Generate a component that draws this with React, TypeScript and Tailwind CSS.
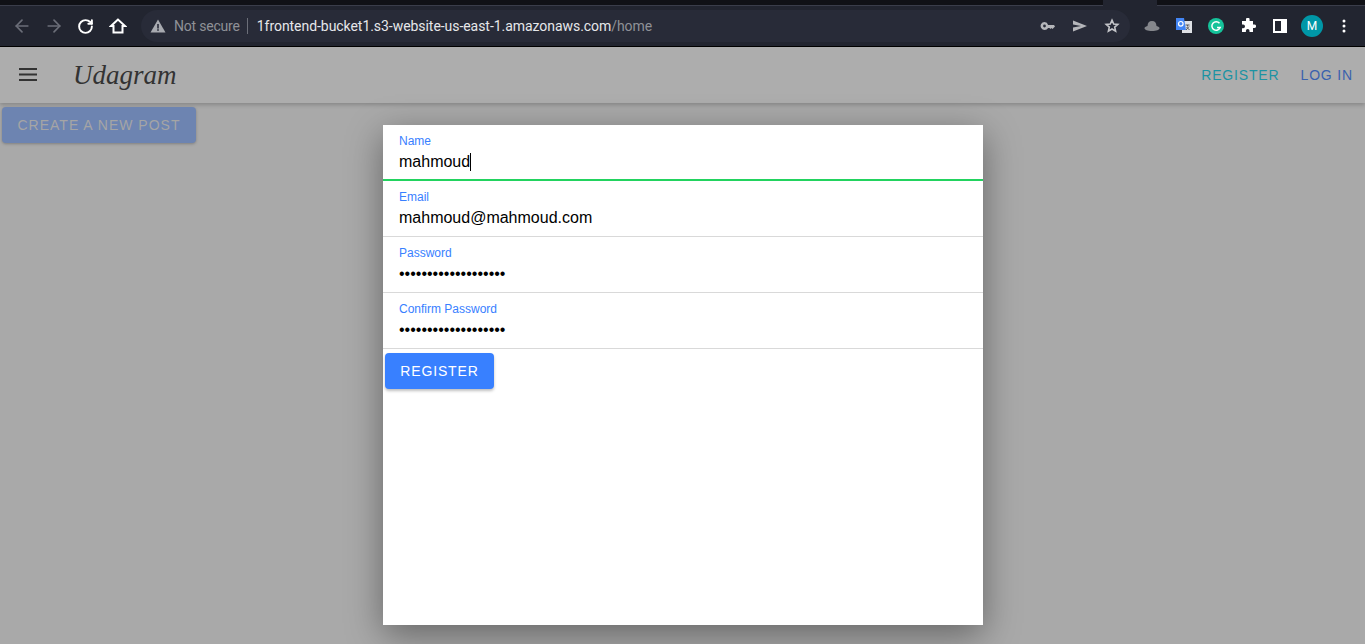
import React from 'react';
import { ArrowLeft, ArrowRight, RotateCw } from 'lucide-react';

const fields = [
  { label: 'Name', value: 'mahmoud', active: true },
  { label: 'Email', value: 'mahmoud@mahmoud.com' },
  { label: 'Password', value: '•••••••••••••••••••' },
  { label: 'Confirm Password', value: '•••••••••••••••••••' },
];

function BrowserBar() {
  return (
    <div className="relative h-[47px] bg-[#0f1014] flex flex-col font-['Roboto',sans-serif]">
      <div className="h-[6px] bg-[#101116] border-b border-[#3a3d4a] shrink-0" />
      {/* active tab runs into the toolbar */}
      <div className="absolute left-[1103px] top-0 h-[6px] w-[54px] bg-[#222530]" />
      <div className="h-[41px] bg-[#222530] border-b border-black flex items-center">
        <div className="flex items-center pl-[12px]">
          <ArrowLeft size={20} className="text-[#6b6e78]" />
          <ArrowRight size={20} className="ml-[12px] text-[#6b6e78]" />
          <RotateCw size={17} strokeWidth={2.75} className="ml-[13px] text-white" />
          <svg width="18" height="18" viewBox="0 0 18 18" className="ml-[15px] text-white">
            <path d="M9 2.500 2 9h2.500v6.500h9V9H16Z" fill="none" stroke="currentColor" strokeWidth="2" strokeLinejoin="miter" />
          </svg>
        </div>
        <div className="ml-[14px] h-[32px] w-[989px] rounded-full bg-[#282b38] flex items-center pl-[9px] pr-[10px]">
          <svg width="16" height="16" viewBox="0 0 16 16" className="text-[#a8aab0]">
            <path d="M8 1.500 15.500 14.500H.5Z" fill="currentColor" />
            <rect x="7.200" y="6" width="1.600" height="4.500" fill="#282b38" />
            <rect x="7.200" y="11.200" width="1.600" height="1.600" fill="#282b38" />
          </svg>
          <span className="ml-[8px] text-[14px] tracking-[-0.2px] text-[#8f9197]">Not secure</span>
          <span className="mx-[7px] h-[16px] w-px bg-[#6b6e78]" />
          <span className="ml-[2px] text-[14px] tracking-[-0.05px] text-[#e6e7ea]">
            1frontend-bucket1.s3-website-us-east-1.amazonaws.com<span className="text-[#8f9197]">/home</span>
          </span>
          <div className="ml-auto flex items-center gap-[16px]">
            <svg width="16" height="16" viewBox="0 0 16 16" className="text-[#b5b6ba]">
              <path d="M4.500 4a4 4 0 1 0 3.600 6h1.400l1 1 1-1 1 1 2.500-2.500L14 7H8.100A4 4 0 0 0 4.500 4Zm0 2.600a1.400 1.400 0 1 1 0 2.800 1.400 1.400 0 0 1 0-2.800Z" fill="currentColor" />
            </svg>
            <svg width="16" height="16" viewBox="0 0 16 16" className="text-[#b5b6ba]">
              <path d="M1 2.500 15 8 1 13.500V9.500L9 8 1 6.500Z" fill="currentColor" />
            </svg>
            <svg width="16" height="16" viewBox="0 0 16 16" className="text-[#c4c5c9]">
              <path d="M8 2.200 9.700 6l4.100.4-3.100 2.700.9 4L8 11l-3.600 2.100.9-4-3.100-2.700L6.300 6Z" fill="none" stroke="currentColor" strokeWidth="1.600" strokeLinejoin="miter" />
            </svg>
          </div>
        </div>
        <div className="ml-[14px] flex items-center gap-[16px]">
          <svg width="16" height="16" viewBox="0 0 16 16">
            <path d="M3.500 8C3.800 4.500 5 3 8 3s4.200 1.500 4.500 5c2 .5 3 1.200 3 2.200 0 1.500-3 2.800-7.500 2.800S.5 11.700.5 10.200c0-1 1-1.700 3-2.200Z" fill="#85878c" />
          </svg>
          <svg width="16" height="16" viewBox="0 0 16 16">
            <rect x="6" y="3" width="10" height="12" fill="#dfe1e5" />
            <path d="M9.500 7h4M11.500 7v1.500M10 12l3-3.500M10.500 9l3 3" fill="none" stroke="#555" strokeWidth="1" />
            <path d="M0 0h8l2 12H0Z" fill="#4285f4" />
            <circle cx="4.800" cy="5.800" r="2.300" fill="none" stroke="#fff" strokeWidth="1.200" />
          </svg>
          <svg width="16" height="16" viewBox="0 0 16 16">
            <circle cx="8" cy="8" r="8" fill="#15c39a" />
            <path d="M11.500 5.200A4.300 4.300 0 1 0 12.200 9.500H9" fill="none" stroke="#fff" strokeWidth="1.500" />
          </svg>
          <svg width="16" height="16" viewBox="0 0 16 16" className="text-white">
            <path d="M6 1.500a1.800 1.800 0 0 1 3.600 0V3H13v3.400h1.300a1.800 1.800 0 0 1 0 3.600H13v4H9.500v-1.200a1.800 1.800 0 0 0-3.600 0V14H2v-3.800h1.200a1.800 1.800 0 0 0 0-3.600H2V3h4Z" fill="currentColor" />
          </svg>
          <svg width="16" height="16" viewBox="0 0 16 16">
            <rect x="1" y="1" width="14" height="14" fill="#fff" />
            <rect x="3" y="3" width="6" height="10" fill="#222530" />
          </svg>
          <div className="ml-[-3px] w-[22px] h-[22px] rounded-full bg-[#0097a7] text-white text-[12px] flex items-center justify-center">M</div>
          <svg width="4" height="16" viewBox="0 0 4 16" className="ml-[3px] text-white">
            <circle cx="2" cy="3" r="1.500" fill="currentColor" />
            <circle cx="2" cy="8" r="1.500" fill="currentColor" />
            <circle cx="2" cy="13" r="1.500" fill="currentColor" />
          </svg>
        </div>
      </div>
    </div>
  );
}

export default function App() {
  return (
    <div className="relative h-[644px] w-[1365px] overflow-hidden bg-[#a9a9a9] font-['Liberation_Sans',sans-serif]">
      <BrowserBar />
      <header className="h-[56px] bg-[#adadad] shadow-[0_2px_4px_rgba(0,0,0,0.2)] flex items-center pl-[19px] pr-[12px]">
        <svg width="18" height="14" viewBox="0 0 18 14" className="text-[#333]">
          <rect y="0" width="18" height="2" fill="currentColor" />
          <rect y="5.500" width="18" height="2" fill="currentColor" />
          <rect y="11" width="18" height="2" fill="currentColor" />
        </svg>
        <span className="ml-[36px] text-[27px] italic text-[#333] font-['Liberation_Serif',serif]">Udagram</span>
        <nav className="ml-auto flex items-center gap-[21px] text-[14px] tracking-[0.84px]">
          <span className="text-[#1b93a3]">REGISTER</span>
          <span className="text-[#3a61ad]">LOG IN</span>
        </nav>
      </header>
      <div className="pl-[2px] pt-[4px]">
        <button className="h-[36px] w-[194px] rounded-[4px] bg-[#6d84b1] text-[#a5a5a5] text-[14px] tracking-[1px] shadow-[0_1px_3px_rgba(0,0,0,0.25)]">
          CREATE A NEW POST
        </button>
      </div>
      <div className="absolute left-[383px] top-[125px] w-[600px] h-[500px] bg-white shadow-[0_10px_34px_rgba(0,0,0,0.4)]">
        {fields.map(f => (
          <div key={f.label} className={`h-[56px] pl-[16px] pt-[9px] ${f.active ? 'border-b-2 border-[#22d35f]' : 'border-b border-[#d9d9d9]'}`}>
            <div className="text-[12px] leading-[14px] text-[#3880ff]">{f.label}</div>
            <div className="mt-[4px] text-[16px] leading-[20px] text-black flex items-center">
              {f.value}
              {f.active && <span className="inline-block w-px h-[18px] bg-black" />}
            </div>
          </div>
        ))}
        <button className="ml-[2px] mt-[4px] h-[36px] w-[109px] rounded-[4px] bg-[#3880ff] text-white text-[14px] tracking-[0.84px] shadow-[0_2px_3px_rgba(0,0,0,0.25)]">
          REGISTER
        </button>
      </div>
    </div>
  );
}
